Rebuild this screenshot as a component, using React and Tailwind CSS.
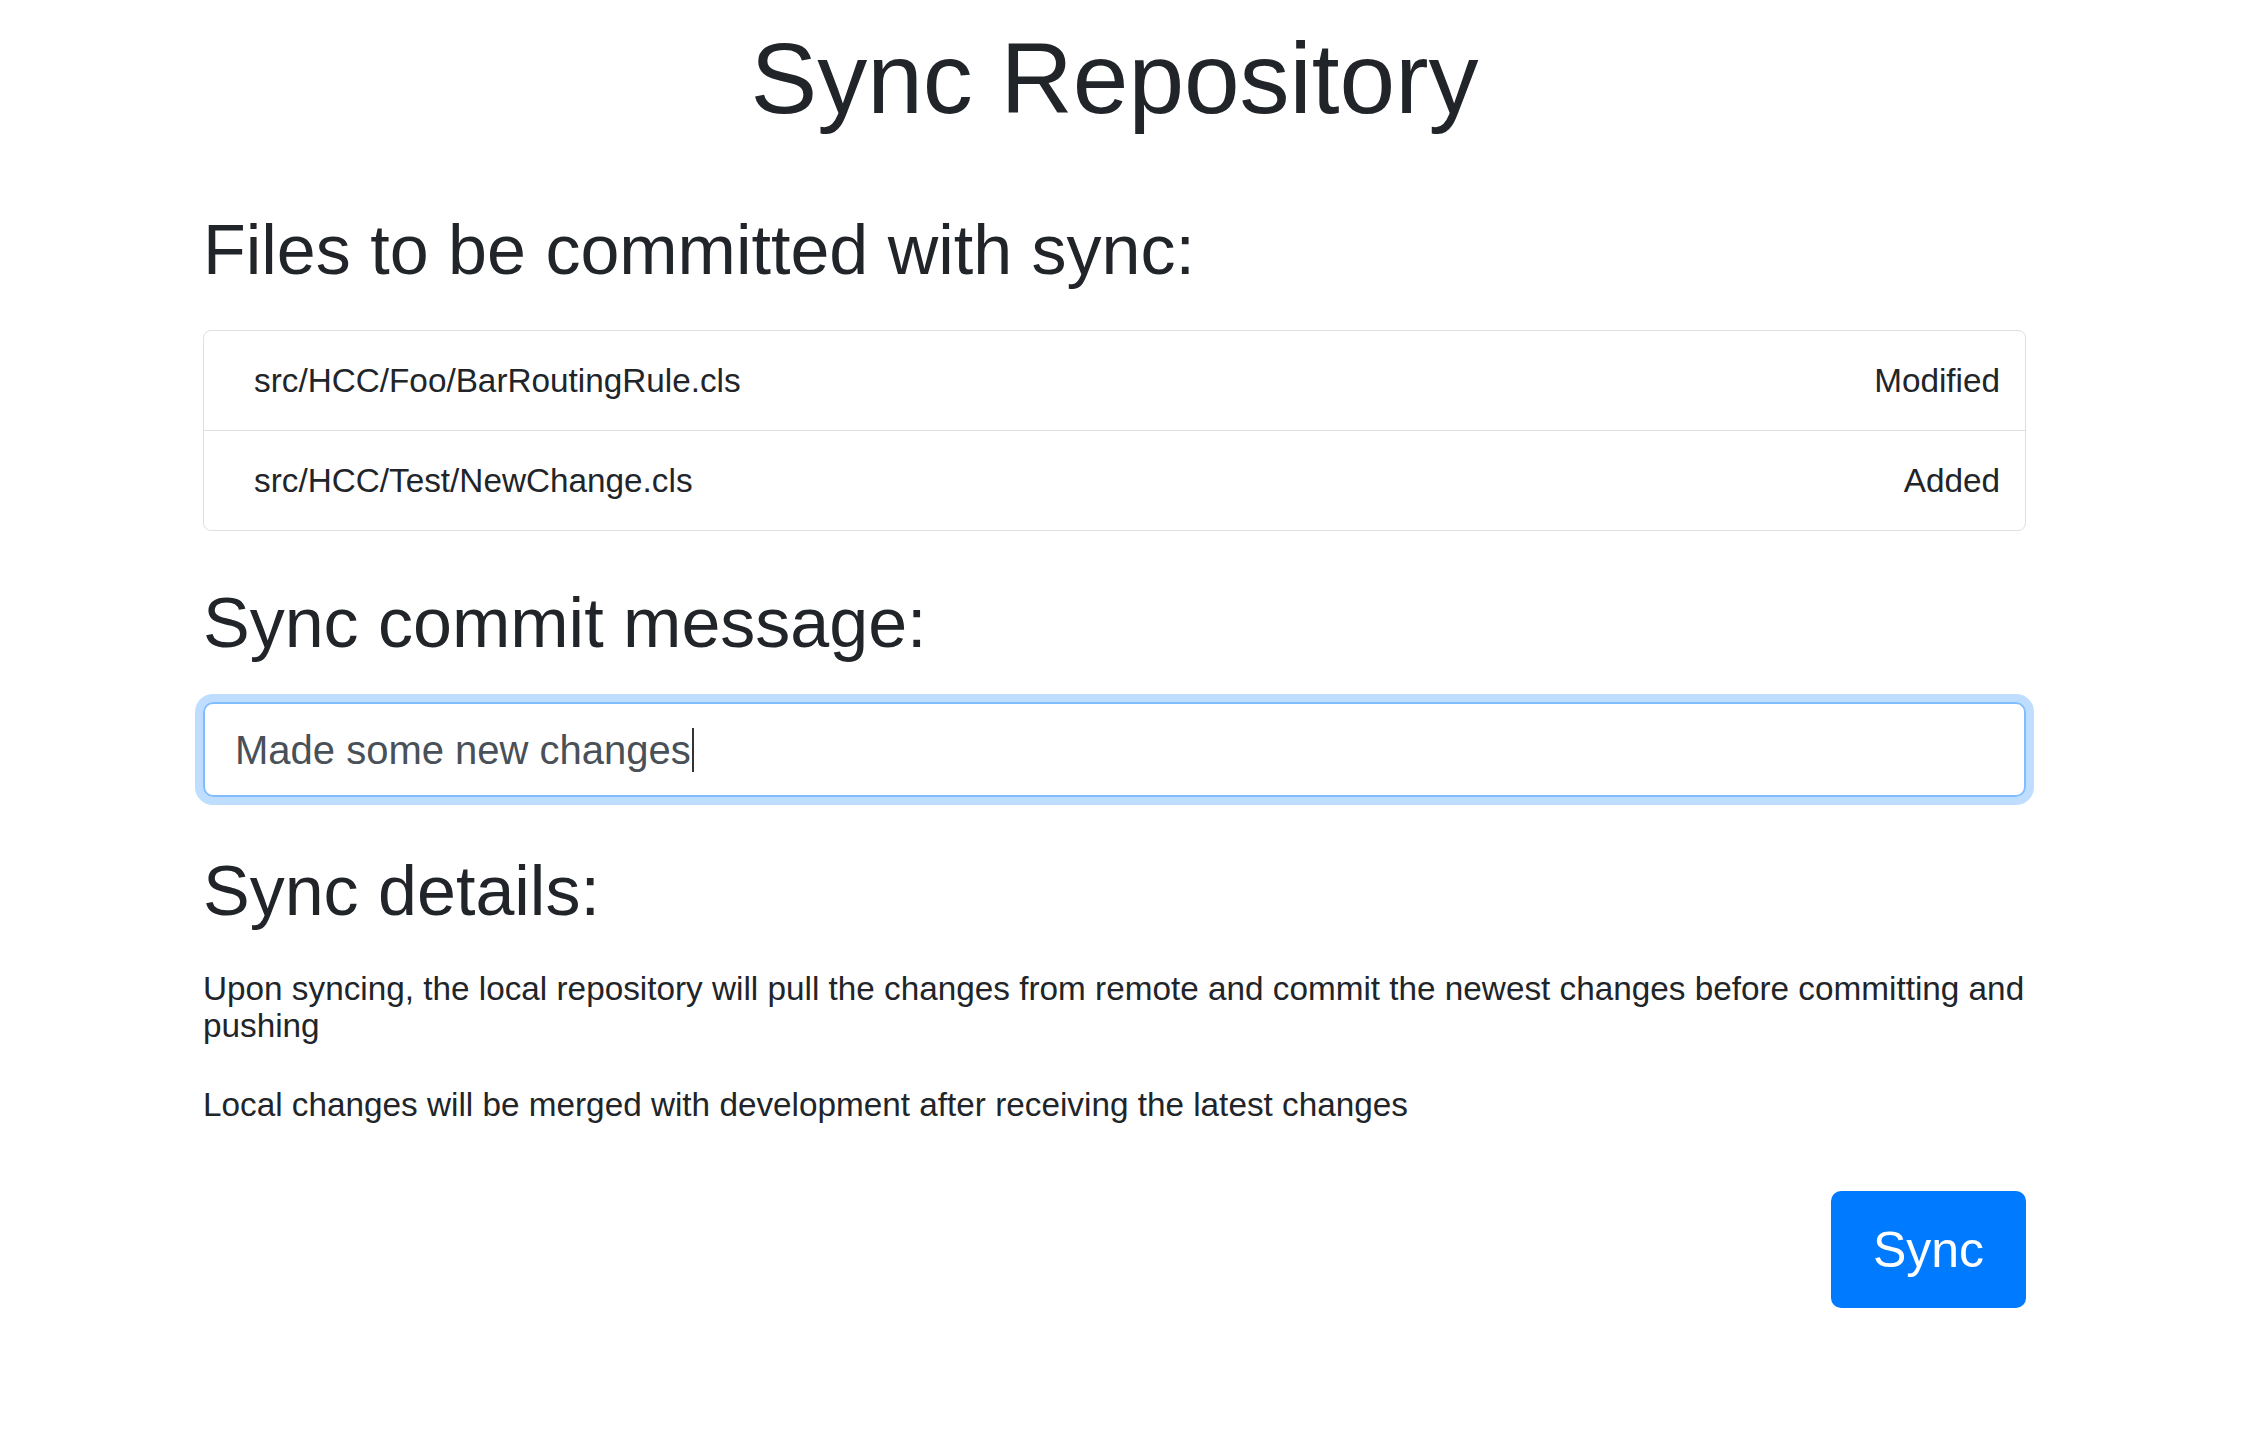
import React from "react";

const files = [
  { path: "src/HCC/Foo/BarRoutingRule.cls", status: "Modified" },
  { path: "src/HCC/Test/NewChange.cls", status: "Added" },
];

export default function App() {
  return (
    <div
      className="min-h-screen bg-white text-[#212529] pl-[203px]"
      style={{ fontFamily: '"Liberation Sans", Arial, sans-serif' }}
    >
      <div className="w-[1823px] flex flex-col pt-[18px] pb-[60px]">
        <h1 className="text-center text-[100px] leading-[120px] font-normal">
          Sync Repository
        </h1>

        <h3 className="mt-[70px] text-[70px] leading-[84px] font-normal">
          Files to be committed with sync:
        </h3>

        <ul className="mt-[38px] border border-[#dfdfdf] rounded-[8px]">
          {files.map((f, i) => (
            <li
              key={f.path}
              className={
                "flex items-center justify-between pl-[50px] pr-[25px] py-[24.5px] text-[33.3px] leading-[50px] " +
                (i > 0 ? "border-t border-[#dfdfdf]" : "")
              }
            >
              <span>{f.path}</span>
              <span>{f.status}</span>
            </li>
          ))}
        </ul>

        <h3 className="mt-[50px] text-[70px] leading-[84px] font-normal">
          Sync commit message:
        </h3>

        <div className="mt-[37px] h-[95px] border-2 border-[#80bdff] rounded-[10px] shadow-[0_0_0_8px_#bfdeff] flex items-center pl-[30px] text-[40px] text-[#495057] leading-[60px]">
          <span>Made some new changes</span>
          <span className="inline-block w-[2px] h-[44px] bg-[#333] ml-[1px]"></span>
        </div>

        <h3 className="mt-[52px] text-[70px] leading-[84px] font-normal">
          Sync details:
        </h3>

        <p className="mt-[37px] text-[33.3px] leading-[37px]">
          Upon syncing, the local repository will pull the changes from remote and commit the newest changes before committing and pushing
        </p>
        <p className="mt-[42px] text-[33.3px] leading-[37px]">
          Local changes will be merged with development after receiving the latest changes
        </p>

        <div className="mt-[68px] flex justify-end">
          <button className="w-[195px] h-[117px] bg-[#007bff] text-white rounded-[10px] text-[50px] leading-none flex items-center justify-center">
            Sync
          </button>
        </div>
      </div>
    </div>
  );
}
